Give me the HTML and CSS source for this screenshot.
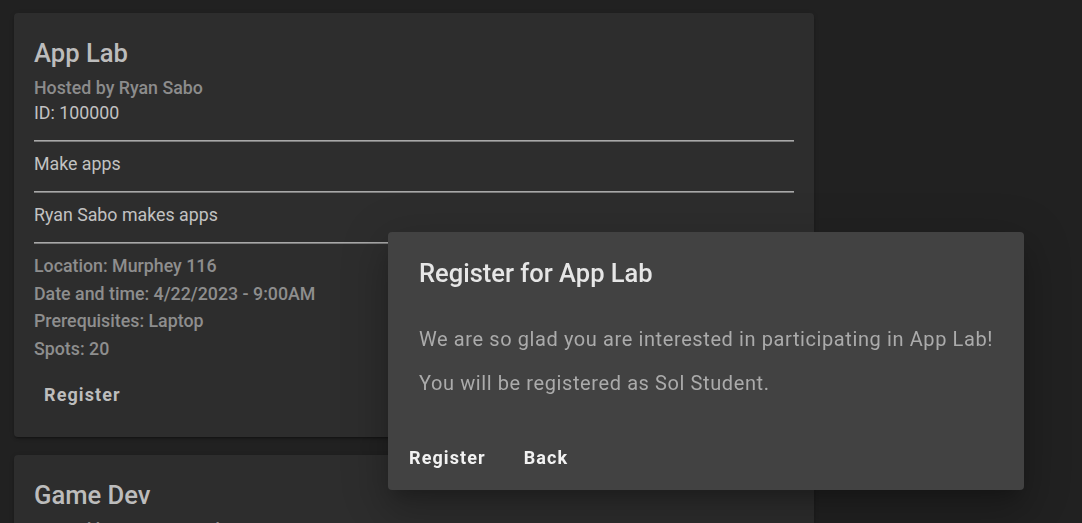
FILE: index.html
```html
<!DOCTYPE html>
<html lang="en">
<head>
<meta charset="utf-8">
<title>Workshops</title>
<link rel="stylesheet" href="styles.css">
</head>
<body>
<main class="list">
  <section class="card">
    <h2 class="card-title">App Lab</h2>
    <div class="card-subtitle">Hosted by Ryan Sabo</div>
    <div class="card-text">ID: 100000</div>
    <hr class="rule">
    <div class="card-text">Make apps</div>
    <hr class="rule">
    <div class="card-text">Ryan Sabo makes apps</div>
    <hr class="rule">
    <ul class="details">
      <li>Location: Murphey 116</li>
      <li>Date and time: 4/22/2023 - 9:00AM</li>
      <li>Prerequisites: Laptop</li>
      <li>Spots: 20</li>
    </ul>
    <div class="card-actions">
      <button class="btn btn-card">Register</button>
    </div>
  </section>
  <section class="card">
    <h2 class="card-title">Game Dev</h2>
    <div class="card-subtitle">Hosted by Morgan Reid</div>
    <div class="card-text">ID: 100001</div>
  </section>
</main>

<div class="dialog" role="dialog">
  <h3 class="dialog-title">Register for App Lab</h3>
  <div class="dialog-body">
    <p>We are so glad you are interested in participating in App Lab!</p>
    <p>You will be registered as Sol Student.</p>
  </div>
  <div class="dialog-actions">
    <button class="btn btn-dialog">Register</button>
    <button class="btn btn-dialog">Back</button>
  </div>
</div>
</body>
</html>
```

FILE: styles.css
```css
* { box-sizing: border-box; }

html, body {
  margin: 0;
  padding: 0;
  height: 100%;
  overflow: hidden;
}

body {
  background: #212121;
  font-family: Roboto, "Liberation Sans", sans-serif;
  color: #bdbdbd;
}

.list {
  display: flex;
  flex-direction: column;
  gap: 18px;
  padding: 13px 0 0 14px;
}

.card {
  width: 800px;
  background: #2d2d2d;
  border-radius: 4px;
  padding: 24px 20px 25px 20px;
  box-shadow: 0 3px 1px -2px rgba(0,0,0,.2), 0 2px 2px 0 rgba(0,0,0,.14), 0 1px 5px 0 rgba(0,0,0,.12);
}

.card-title {
  margin: 0;
  font-size: 25.6px;
  line-height: 32px;
  font-weight: 500;
  color: #bcbcbc;
}

.card-subtitle {
  margin-top: 6px;
  font-size: 17.8px;
  line-height: 25px;
  font-weight: 500;
  color: #8c8c8c;
}

.card-text {
  font-size: 17.8px;
  line-height: 25px;
  color: #c2c2c2;
}

.rule {
  margin: 15px 0 9px 0;
  border: 0;
  border-top: 1px solid #a8a8a8;
  border-bottom: 1px solid #7a7a7a;
  height: 0;
}

.details {
  list-style: none;
  margin: 0;
  padding: 0;
  margin-top: -1px;
  font-size: 17.8px;
  line-height: 27.5px;
  font-weight: 500;
  color: #8e8e8e;
}

.card-actions {
  display: flex;
  margin-top: 14px;
}

.btn {
  background: none;
  border: 0;
  font-family: Roboto, "Liberation Sans", sans-serif;
  font-size: 18px;
  font-weight: 700;
  letter-spacing: 1.1px;
  height: 36px;
  padding: 0 10px;
  cursor: pointer;
}

.btn-card {
  color: #bdbdbd;
}

.dialog {
  position: fixed;
  left: 388px;
  top: 232px;
  width: 636px;
  height: 258px;
  background: #424242;
  border-radius: 4px;
  padding: 25px 0 15px 0;
  display: flex;
  flex-direction: column;
  box-shadow: 0 11px 15px -7px rgba(0,0,0,.2), 0 24px 38px 3px rgba(0,0,0,.14), 0 9px 46px 8px rgba(0,0,0,.12);
}

.dialog-title {
  margin: 0;
  padding: 0 31px;
  font-size: 25.5px;
  line-height: 32px;
  font-weight: 500;
  color: #e6e6e6;
}

.dialog-body {
  padding: 0 31px;
  margin-top: 36px;
  font-size: 20px;
  line-height: 28px;
  color: #ababab;
  letter-spacing: 0.6px;
}

.dialog-body p {
  margin: 0 0 16px 0;
}

.dialog-actions {
  margin-top: auto;
  display: flex;
  gap: 18px;
  padding-left: 11px;
}

.btn-dialog {
  color: #f2f2f2;
}
```
